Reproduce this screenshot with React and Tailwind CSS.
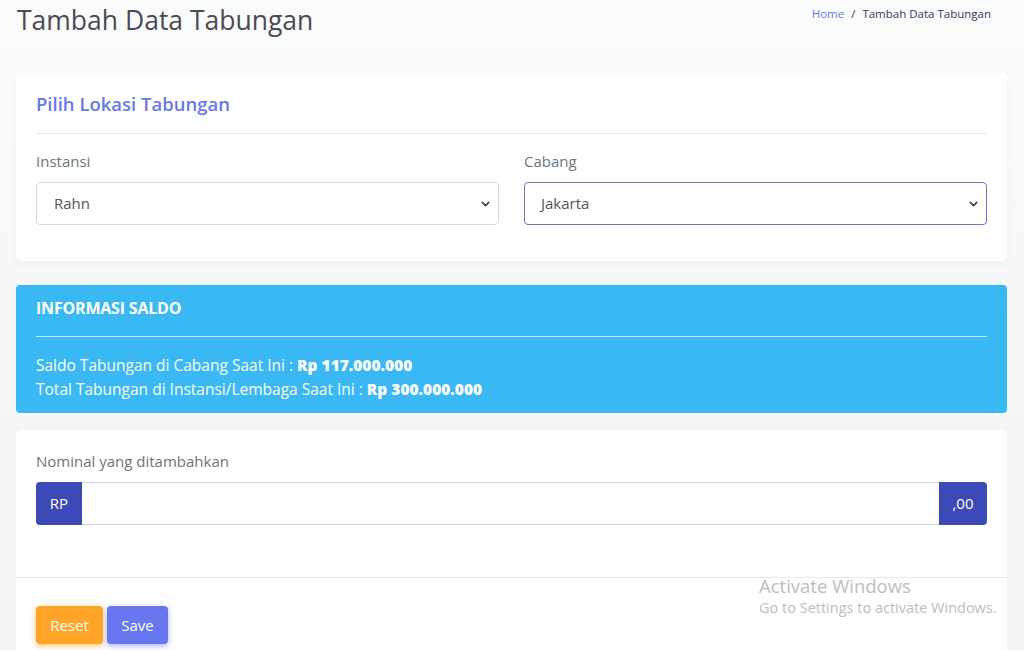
import { ChevronDown } from "lucide-react";

export default function App() {
    return (
        <div className="relative min-h-[650px] bg-gradient-to-b from-[#fafbfb] to-[#f2f3f4] text-[#6c757d] overflow-hidden" style={{ fontFamily: "'Open Sans', 'Noto Sans', sans-serif" }}>
            {/* Section header */}
            <header className="flex items-start justify-between pl-[17px] pr-[33px] pt-[2px] pb-[24px]">
                <h1 className="text-[26.5px] leading-[36px] text-[#4a4b55]">Tambah Data Tabungan</h1>
                <nav className="flex items-center gap-[7px] text-[11.5px] pt-[3px] text-[#34395e]">
                    <span className="text-[#6777ef]">Home</span>
                    <span>/</span>
                    <span>Tambah Data Tabungan</span>
                </nav>
            </header>

            <div className="pl-[16px] pr-[17px] pt-[11px] space-y-[24px]">
                {/* Lokasi */}
                <section className="bg-white rounded-[5px] shadow-[0_4px_8px_rgba(0,0,0,0.03)] px-[20px] pt-[18px] pb-[36px]">
                    <h4 className="text-[18.5px] font-semibold text-[#6777ef] leading-[26px] pb-[16px] border-b border-[#e6e7ea]">Pilih Lokasi Tabungan</h4>
                    <div className="grid grid-cols-2 gap-[25px] pt-[16px]">
                        <div>
                            <label className="block text-[15px] leading-[22px] mb-[10px]">Instansi</label>
                            <div className="relative h-[43px] border border-[#d8dadf] rounded-[4px] flex items-center pl-[17px] text-[15px] text-[#555]">
                                Rahn
                                <ChevronDown className="absolute right-[6px] top-1/2 -translate-y-1/2 w-[13px] h-[13px] text-[#444]" strokeWidth={3} />
                            </div>
                        </div>
                        <div>
                            <label className="block text-[15px] leading-[22px] mb-[10px]">Cabang</label>
                            <div className="relative h-[43px] border border-[#6b76c9] rounded-[4px] flex items-center pl-[16px] text-[15px] text-[#555]">
                                Jakarta
                                <ChevronDown className="absolute right-[6px] top-1/2 -translate-y-1/2 w-[13px] h-[13px] text-[#444]" strokeWidth={3} />
                            </div>
                        </div>
                    </div>
                </section>

                {/* Informasi saldo */}
                <section className="bg-[#3ab8f3] rounded-[4px] text-white px-[20px] pt-[12px] pb-[12px]">
                    <h4 className="text-[16px] font-bold leading-[22px] tracking-[-0.2px] pb-[17px] border-b border-white/70">INFORMASI SALDO</h4>
                    <p className="text-[15.5px] leading-[24px] pt-[16px]">Saldo Tabungan di Cabang Saat Ini : <span className="font-extrabold">Rp 117.000.000</span></p>
                    <p className="text-[15.5px] leading-[24px]">Total Tabungan di Instansi/Lembaga Saat Ini : <span className="font-extrabold">Rp 300.000.000</span></p>
                </section>

                {/* Nominal */}
                <section className="bg-white rounded-[5px] -mt-[7px]">
                    <div className="px-[20px] pt-[20px] pb-[52px] border-b border-[#e6e7ea]">
                        <label className="block text-[15px] leading-[22px] mb-[10px]">Nominal yang ditambahkan</label>
                        <div className="flex h-[43px]">
                            <span className="w-[46px] flex items-center justify-center bg-[#3c4ab8] text-white text-[15px] rounded-l-[4px]">RP</span>
                            <input className="flex-1 border-y border-[#d8dadf] outline-none" />
                            <span className="w-[48px] flex items-center justify-center bg-[#3c4ab8] text-white text-[15px] rounded-r-[4px]">,00</span>
                        </div>
                    </div>
                    <div className="flex gap-[4px] px-[20px] pt-[28px] pb-[10px]">
                        <button className="h-[38px] w-[67px] rounded-[4px] bg-[#ffa426] text-white text-[15px] shadow-[0_2px_6px_#ffc473]">Reset</button>
                        <button className="h-[38px] w-[61px] rounded-[4px] bg-[#6777ef] text-white text-[15px] shadow-[0_2px_6px_#acb5f6]">Save</button>
                    </div>
                </section>
            </div>

            {/* Windows watermark */}
            <div className="absolute left-[759px] top-[574px] text-[#bdbdbd] pointer-events-none" style={{ fontFamily: "'Open Sans', sans-serif" }}>
                <div className="text-[18.5px] leading-[24px]">Activate Windows</div>
                <div className="text-[14.5px] leading-[20px]">Go to Settings to activate Windows.</div>
            </div>
        </div>
    );
}
